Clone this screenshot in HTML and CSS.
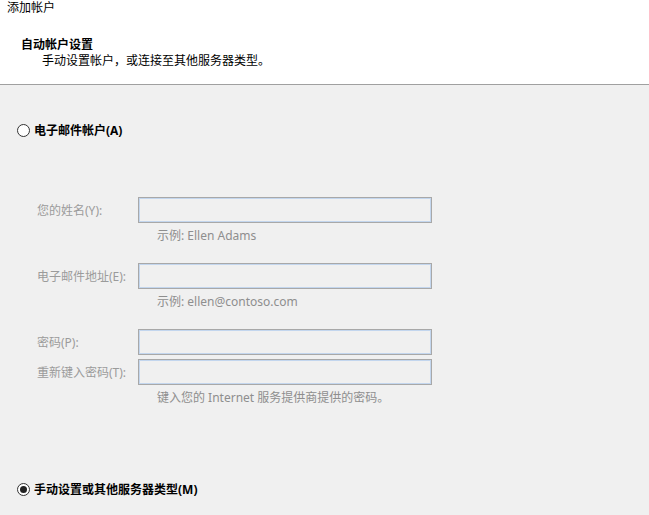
FILE: index.html
```html
<!DOCTYPE html>
<html lang="zh-CN">
<head>
  <meta charset="UTF-8" />
  <title>添加帐户</title>
  <link rel="stylesheet" href="styles.css">
</head>
<body>
  <div class="header">
    <div class="title">添加帐户</div>
    <div class="heading">自动帐户设置</div>
    <div class="subheading">手动设置帐户，或连接至其他服务器类型。</div>
  </div>

  <div class="content">
    <!-- 电子邮件帐户 -->
    <label class="radio-row">
      <span class="radio"></span>
      <span class="radio-text">电子邮件帐户(A)</span>
    </label>

    <div class="form">
      <div class="field">
        <span class="field-label">您的姓名(Y):</span>
        <span class="input"></span>
      </div>
      <div class="hint">示例: Ellen Adams</div>

      <div class="field gap-top">
        <span class="field-label">电子邮件地址(E):</span>
        <span class="input"></span>
      </div>
      <div class="hint">示例: ellen@contoso.com</div>

      <div class="field gap-top">
        <span class="field-label">密码(P):</span>
        <span class="input"></span>
      </div>
      <div class="field tight-top">
        <span class="field-label">重新键入密码(T):</span>
        <span class="input"></span>
      </div>
      <div class="hint">键入您的 Internet 服务提供商提供的密码。</div>
    </div>

    <!-- 手动设置 -->
    <label class="radio-row manual">
      <span class="radio checked"></span>
      <span class="radio-text">手动设置或其他服务器类型(M)</span>
    </label>
  </div>
</body>
</html>
```

FILE: styles.css
```css
body {
    margin: 0;
    background: #f0f0f0;
    font-family: "Noto Sans", "Noto Sans CJK SC", sans-serif;
    font-size: 12px;
    color: #000;
    height: 515px;
    overflow: hidden;
}
.header {
    background: #fff;
    height: 84px;
    border-bottom: 1px solid #a0a0a0;
    box-sizing: border-box;
    height: 85px;
}
.title {
    line-height: 16px;
    padding-left: 7px;
}
.heading {
    font-weight: bold;
    line-height: 16px;
    margin-top: 21px;
    padding-left: 21px;
}
.subheading {
    line-height: 16px;
    padding-left: 42px;
}
.content {
    padding: 37px 0 0 17px;
}
.radio-row {
    display: flex;
    align-items: center;
    height: 16px;
    font-weight: bold;
}
.radio {
    width: 11px;
    height: 11px;
    border: 1px solid #333;
    border-radius: 50%;
    background: #fff;
    margin-right: 4px;
    position: relative;
}
.radio.checked::after {
    content: "";
    position: absolute;
    left: 2px;
    top: 2px;
    width: 7px;
    height: 7px;
    border-radius: 50%;
    background: #222;
}
.form {
    margin-top: 59px;
    padding-left: 20px;
}
.field {
    display: flex;
    align-items: center;
}
.gap-top {
    margin-top: 19px;
}
.tight-top {
    margin-top: 4px;
}
.field-label {
    width: 101px;
    color: #9b9b9b;
}
.input {
    width: 294px;
    height: 26px;
    box-sizing: border-box;
    border: 1px solid #a8a8a8;
    box-shadow: inset 0 0 0 1px #c3d6ee;
    background: #f0f0f0;
}
.hint {
    line-height: 16px;
    margin-top: 5px;
    padding-left: 120px;
    color: #8e8e8e;
}
.manual {
    margin-top: 75px;
}
```
